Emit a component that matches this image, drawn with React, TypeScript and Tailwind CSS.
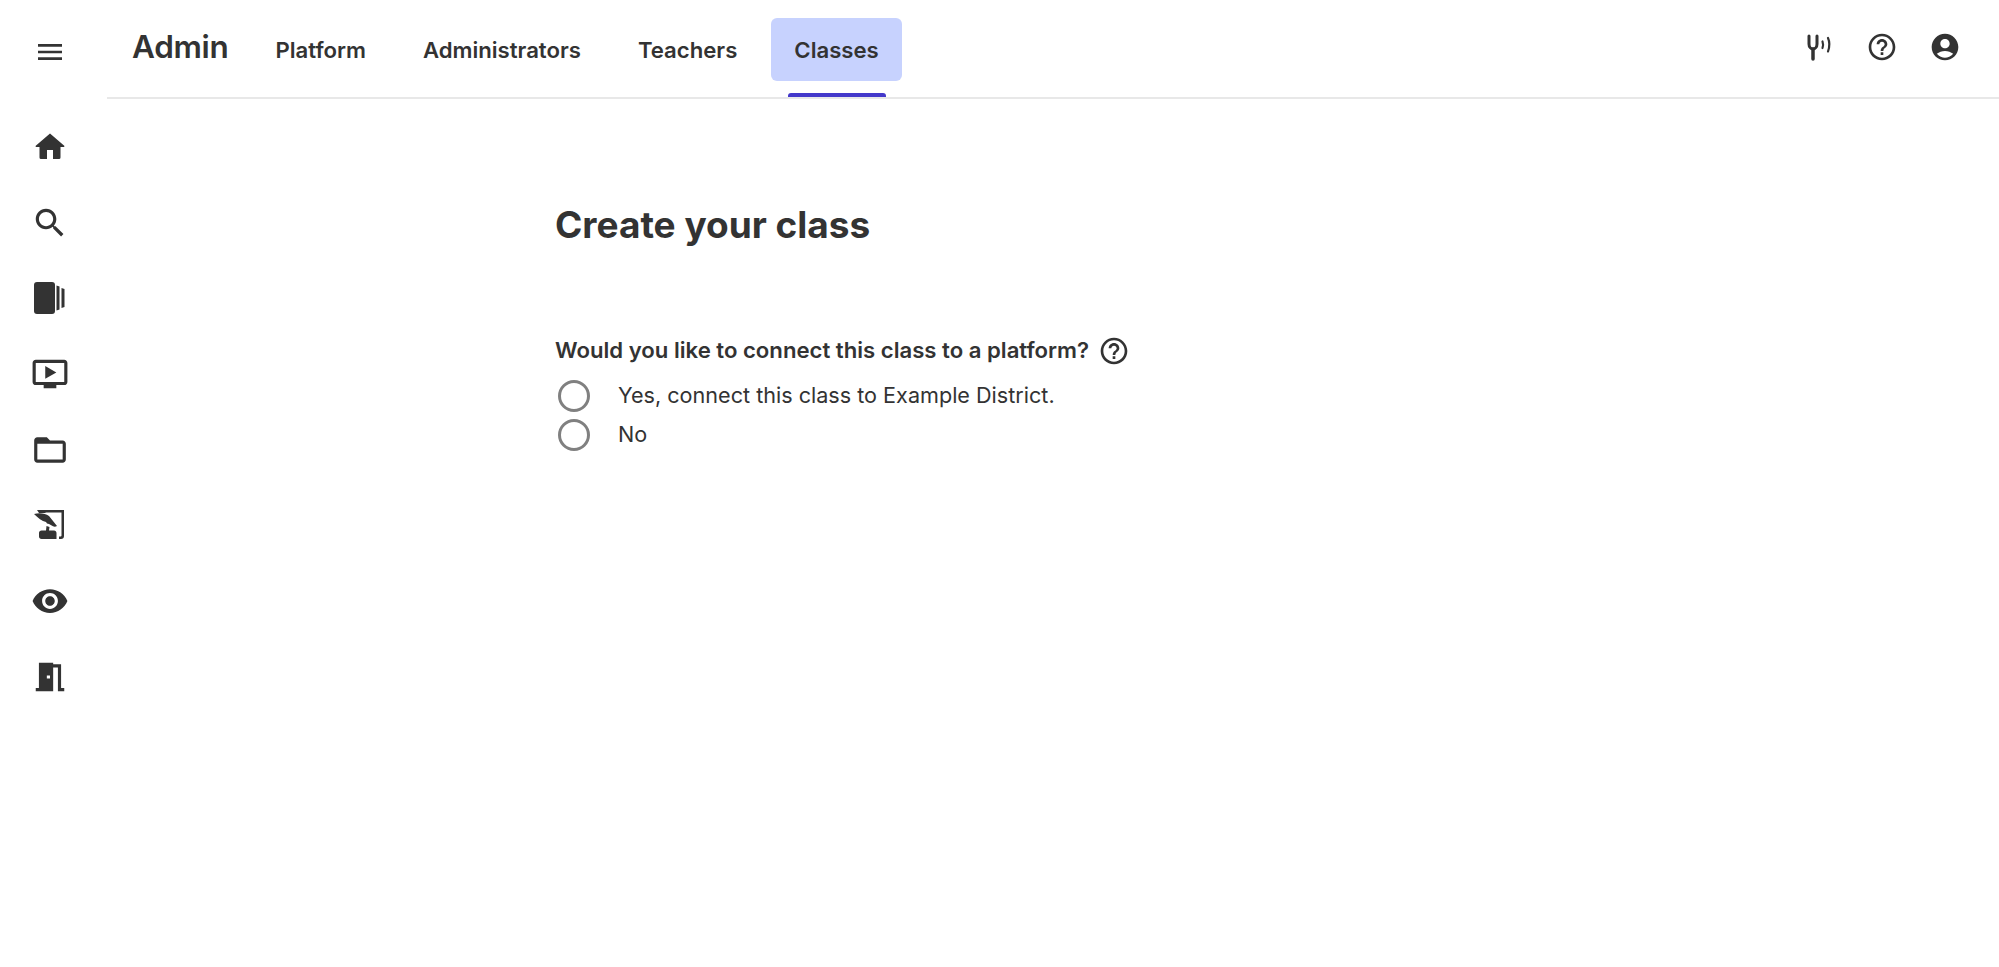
import type { ReactNode } from 'react';

const Icon = ({ size, children, className = '' }: { size: number; children: ReactNode; className?: string }) => (
  <svg width={size} height={size} viewBox="0 0 24 24" fill="#333333" className={className}>
    {children}
  </svg>
);

const HELP =
  'M11 18h2v-2h-2v2zm1-16C6.48 2 2 6.48 2 12s4.48 10 10 10 10-4.48 10-10S17.52 2 12 2zm0 18c-4.41 0-8-3.59-8-8s3.59-8 8-8 8 3.59 8 8-3.59 8-8 8zm0-14c-2.21 0-4 1.79-4 4h2c0-1.1.9-2 2-2s2 .9 2 2c0 2-3 1.75-3 5h2c0-2.25 3-2.5 3-5 0-2.21-1.79-4-4-4z';

const sideIcons: ReactNode[] = [
  <Icon size={36} key="home">
    <path d="M10 20v-6h4v6h4a1 1 0 0 0 1-1v-7h2.2c.4 0 .6-.5.3-.8L12 3 2.500 11.200c-.3.3-.1.8.3.8H5v7a1 1 0 0 0 1 1z" />
  </Icon>,
  <Icon size={38} key="search">
    <path d="M15.500 14h-.79l-.28-.27C15.410 12.590 16 11.110 16 9.500 16 5.910 13.090 3 9.500 3S3 5.910 3 9.500 5.910 16 9.500 16c1.610 0 3.090-.59 4.230-1.570l.27.28v.79l5 4.990L20.490 19l-4.990-5zm-6 0C7.010 14 5 11.990 5 9.500S7.010 5 9.500 5 14 7.010 14 9.500 11.990 14 9.500 14z" />
  </Icon>,
  <svg width={38} height={38} viewBox="0 0 38 38" fill="#333333" key="book">
    <rect x="3" y="3" width="21" height="32" rx="3" />
    <path d="M25.500 6.500l3 1v23l-3 1z" />
    <path d="M30.500 9l3 1v18l-3 1z" />
  </svg>,
  <Icon size={38} key="video">
    <path d="M21 3H3c-1.110 0-2 .89-2 2v12c0 1.100.89 2 2 2h5v2h8v-2h5c1.100 0 1.990-.9 1.990-2L23 5c0-1.110-.9-2-2-2zm0 14H3V5h18v12zm-5-6l-7 4V7z" />
  </Icon>,
  <Icon size={38} key="folder">
    <path d="M20 6h-8l-2-2H4c-1.100 0-1.990.9-1.990 2L2 18c0 1.100.9 2 2 2h16c1.100 0 2-.9 2-2V8c0-1.100-.9-2-2-2zm0 12H4V8h16v10z" />
  </Icon>,
  <svg width={38} height={38} viewBox="0 0 38 38" fill="#333333" key="quill">
    <path d="M6 4h27v26a3 3 0 0 1-3 3h-2v-2.500h1.500a1 1 0 0 0 1-1V6.500H15l-1 .5H8z" />
    <path d="M3 8c5-1.500 11-1 15 2l8 10c-1.500 1-3 .8-4 .3l-4-2.300-2-.5-1-1.500C11 15 7 12 3 8z" />
    <path d="M8 27c0-1.500 1-2.500 2.500-2.500H15l.5-4.500 3 1-.5 3.500h5c1.500 0 2.500 1 2.500 2.500v6H10.500C9 33 8 32 8 30.500z" />
  </svg>,
  <Icon size={38} key="eye">
    <path d="M12 4.500C7 4.500 2.730 7.610 1 12c1.730 4.390 6 7.500 11 7.500s9.270-3.110 11-7.500c-1.730-4.390-6-7.500-11-7.500zM12 17c-2.760 0-5-2.240-5-5s2.240-5 5-5 5 2.240 5 5-2.240 5-5 5zm0-8c-1.660 0-3 1.340-3 3s1.340 3 3 3 3-1.340 3-3-1.340-3-3-3z" />
  </Icon>,
  <Icon size={38} key="door">
    <path d="M14 6v15H3v-2h2V3h9v1h5v15h2v2h-4V6h-3zm-4 5v2h2v-2h-2z" />
  </Icon>,
];

const tabs = ['Platform', 'Administrators', 'Teachers', 'Classes'];

const Radio = ({ label }: { label: string }) => (
  <label className="flex items-center h-[39px]">
    <span className="w-[32px] h-[32px] ml-[3px] rounded-full border-[3px] border-[#808080] bg-white" />
    <span className="ml-[28px] text-[21.6px] text-[#333333]">{label}</span>
  </label>
);

export default function App() {
  return (
    <div className="flex min-h-[967px] bg-white text-[#333333] font-['Inter',sans-serif]">
      {/* Side rail */}
      <aside className="w-[107px] shrink-0 flex flex-col items-center pr-[8px]">
        <div className="h-[109px] pb-[5px] flex items-center justify-center">
          <Icon size={32}>
            <path d="M3 18h18v-2H3v2zm0-5h18v-2H3v2zm0-7v2h18V6H3z" />
          </Icon>
        </div>
        {sideIcons.map((icon, i) => (
          <div key={i} className="h-[75.7px] flex items-center justify-center">
            {icon}
          </div>
        ))}
      </aside>

      <div className="flex-1 flex flex-col">
        {/* Header */}
        <header className="h-[99px] border-b-2 border-[#e8e8e8] flex pl-[25px] pr-[38px]">
          <div className="text-[31.5px] leading-[94px] font-semibold tracking-[-0.3px] mr-[24px]">Admin</div>
          <nav className="flex gap-[11px] pt-[18px]">
            {tabs.map((t) => (
              <div
                key={t}
                className={`relative h-[63px] px-[23px] pt-[2px] rounded-[6px] flex items-center text-[22.15px] font-semibold ${
                  t === 'Classes' ? 'bg-[#c7d2fe]' : ''
                }`}
              >
                {t}
                {t === 'Classes' && (
                  <span className="absolute left-[17px] right-[16px] top-[75px] h-[4px] rounded-t-[3px] bg-[#4338ca]" />
                )}
              </div>
            ))}
          </nav>
          <div className="ml-auto flex items-start gap-[31px] pt-[31px]">
            <svg width={32} height={32} viewBox="0 0 32 32" fill="none" stroke="#333333" strokeLinecap="round">
              <path d="M6 5v8c0 3 2 5 4 5s4-2 4-5V5" strokeWidth="3" />
              <path d="M10 18v10" strokeWidth="3.500" />
              <path d="M19.500 10.500c.7 2 .7 4.500 0 6.500" strokeWidth="2.200" />
              <path d="M25 7c1.600 3.500 1.600 9 0 13.500" strokeWidth="2.200" />
            </svg>
            <Icon size={32}>
              <path d={HELP} />
            </Icon>
            <Icon size={32}>
              <path d="M12 2C6.480 2 2 6.480 2 12s4.480 10 10 10 10-4.480 10-10S17.520 2 12 2zm0 4c1.930 0 3.500 1.570 3.500 3.500S13.930 13 12 13s-3.500-1.570-3.500-3.500S10.070 6 12 6zm0 14c-2.030 0-4.430-.82-6.140-2.880C7.550 15.800 9.680 15 12 15s4.450.8 6.140 2.120C16.430 19.180 14.030 20 12 20z" />
            </Icon>
          </div>
        </header>

        {/* Form */}
        <main className="pl-[448px] pt-[101px]">
          <h1 className="text-[37px] leading-[50px] font-bold">Create your class</h1>
          <div className="mt-[84px] flex items-center h-[34px]">
            <span className="text-[22.15px] font-semibold">Would you like to connect this class to a platform?</span>
            <Icon size={32} className="ml-[9px]">
              <path d={HELP} />
            </Icon>
          </div>
          <div className="mt-[8px] flex flex-col">
            <Radio label="Yes, connect this class to Example District." />
            <Radio label="No" />
          </div>
        </main>
      </div>
    </div>
  );
}
